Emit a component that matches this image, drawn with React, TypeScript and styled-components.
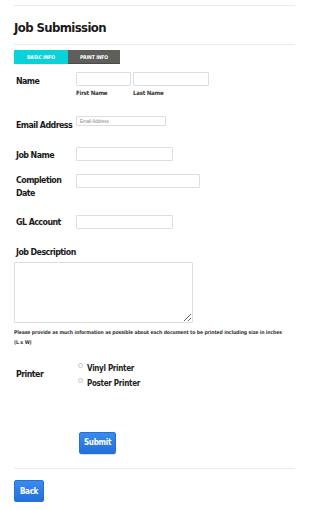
import React from 'react';
import styled, { createGlobalStyle } from 'styled-components';

const GlobalStyle = createGlobalStyle`
  html, body {
    margin: 0;
    padding: 0;
    background: #fff;
  }
  body {
    font-family: "DejaVu Sans Condensed", "DejaVu Sans", sans-serif;
    font-stretch: condensed;
    color: #222;
  }
  * { box-sizing: border-box; }
`;

const Page = styled.div`
  width: 310px;
  padding: 5px 15px 0 14px;
`;

const Rule = styled.hr<{ $top?: number; $bottom?: number }>`
  border: 0;
  border-top: 1px solid #ececec;
  margin: ${({ $top = 0 }) => $top}px 0 ${({ $bottom = 0 }) => $bottom}px;
`;

const Title = styled.h1`
  font-size: 13px;
  font-weight: bold;
  letter-spacing: -0.6px;
  margin: 0;
  padding: 15px 0 10px;
  line-height: 13px;
  color: #1a1a1a;
`;

const Tabs = styled.div`
  display: flex;
  margin-top: 5px;
`;

const Tab = styled.div<{ $active?: boolean }>`
  width: ${({ $active }) => ($active ? 54 : 52)}px;
  height: 14px;
  display: flex;
  align-items: center;
  justify-content: center;
  font-size: 5px;
  font-weight: bold;
  letter-spacing: -0.1px;
  color: #fff;
  background: ${({ $active }) => ($active ? '#07d3d8' : '#5e5f5a')};
  border-bottom: 1px solid ${({ $active }) => ($active ? '#07d3d8' : '#4a4b47')};
`;

const Row = styled.div<{ $gap: number }>`
  display: flex;
  align-items: flex-start;
  margin-top: ${({ $gap }) => $gap}px;
`;

const Label = styled.div<{ $top?: number }>`
  width: 62px;
  padding-left: 2px;
  padding-top: ${({ $top = 0 }) => $top}px;
  font-size: 8.8px;
  font-weight: bold;
  letter-spacing: -0.55px;
  line-height: 13px;
  white-space: nowrap;
  color: #1a1a1a;
  flex-shrink: 0;
`;

const Field = styled.div`
  display: flex;
  flex-direction: column;
`;

const NameInputs = styled.div`
  display: flex;
  gap: 2px;
`;

const Input = styled.input<{ $w: number; $h?: number }>`
  width: ${({ $w }) => $w}px;
  height: ${({ $h = 14 }) => $h}px;
  border: 1px solid #dedede;
  border-radius: 1px;
  padding: 0 3px;
  font-size: 4.5px;
  font-family: "Liberation Sans", Arial, sans-serif;
  background: #fff;
  &::placeholder { color: #888; }
`;

const SubLabels = styled.div`
  display: flex;
  font-size: 6px;
  font-weight: bold;
  letter-spacing: -0.2px;
  color: #333;
  margin-top: 3px;
  line-height: 8px;
`;

const SubLabel = styled.span<{ $w: number }>`
  width: ${({ $w }) => $w}px;
`;

const BlockLabel = styled.div`
  margin-top: 17px;
  padding-left: 2px;
  font-size: 8.8px;
  font-weight: bold;
  letter-spacing: -0.55px;
  line-height: 13px;
  color: #1a1a1a;
`;

const TextArea = styled.textarea`
  display: block;
  margin-top: 3px;
  width: 179px;
  height: 61px;
  border: 1px solid #dedede;
  border-radius: 1px;
  resize: both;
`;

const Help = styled.p`
  margin: 4px 0 0;
  font-size: 5.1px;
  letter-spacing: -0.1px;
  line-height: 10px;
  color: #333;
  font-weight: bold;
`;

const Options = styled.div`
  display: flex;
  flex-direction: column;
  gap: 3px;
  padding-left: 2px;
`;

const Option = styled.label`
  display: flex;
  align-items: flex-start;
  gap: 4px;
  font-size: 8px;
  font-weight: bold;
  letter-spacing: -0.3px;
  color: #222;
  line-height: 12px;
`;

const Radio = styled.span`
  width: 5px;
  height: 5px;
  border: 1px solid #c4c4c4;
  border-radius: 50%;
  flex-shrink: 0;
`;

const Button = styled.button<{ $w: number }>`
  width: ${({ $w }) => $w}px;
  height: 22px;
  padding: 0;
  border: 1px solid #2a6fd0;
  border-radius: 2px;
  background: linear-gradient(#3a8bee, #2370dc);
  color: #fff;
  font-family: inherit;
  font-stretch: condensed;
  font-size: 8px;
  font-weight: bold;
  letter-spacing: -0.3px;
  box-shadow: 0 1px 1px rgba(0, 0, 0, 0.15);
`;

const SubmitRow = styled.div`
  padding-left: 65px;
  margin-top: 40px;
`;

export default function App() {
  return (
    <Page>
      <GlobalStyle />
      <Rule />
      <Title>Job Submission</Title>
      <Rule />
      <Tabs>
        <Tab $active>BASIC INFO</Tab>
        <Tab>PRINT INFO</Tab>
      </Tabs>

      <Row $gap={8}>
        <Label $top={3}>Name</Label>
        <Field>
          <NameInputs>
            <Input $w={55} />
            <Input $w={76} />
          </NameInputs>
          <SubLabels>
            <SubLabel $w={57}>First Name</SubLabel>
            <SubLabel $w={76}>Last Name</SubLabel>
          </SubLabels>
        </Field>
      </Row>

      <Row $gap={19}>
        <Label $top={3}>Email Address</Label>
        <Input $w={90} $h={10} placeholder="Email Address" />
      </Row>

      <Row $gap={15}>
        <Label $top={2}>Job Name</Label>
        <Input $w={97} />
      </Row>

      <Row $gap={12}>
        <Label>
          Completion
          <br />
          Date
        </Label>
        <Input $w={124} />
      </Row>

      <Row $gap={15}>
        <Label $top={1}>GL Account</Label>
        <Input $w={97} />
      </Row>

      <BlockLabel>Job Description</BlockLabel>
      <TextArea />
      <Help>
        Please provide as much information as possible about each document to be printed including size in inches
        <br />
        (L x W)
      </Help>

      <Row $gap={16}>
        <Label $top={5}>Printer</Label>
        <Options>
          <Option>
            <Radio />
            Vinyl Printer
          </Option>
          <Option>
            <Radio />
            Poster Printer
          </Option>
        </Options>
      </Row>

      <SubmitRow>
        <Button $w={37}>Submit</Button>
      </SubmitRow>
      <Rule $top={14} $bottom={10} />
      <Button $w={30}>Back</Button>
    </Page>
  );
}
